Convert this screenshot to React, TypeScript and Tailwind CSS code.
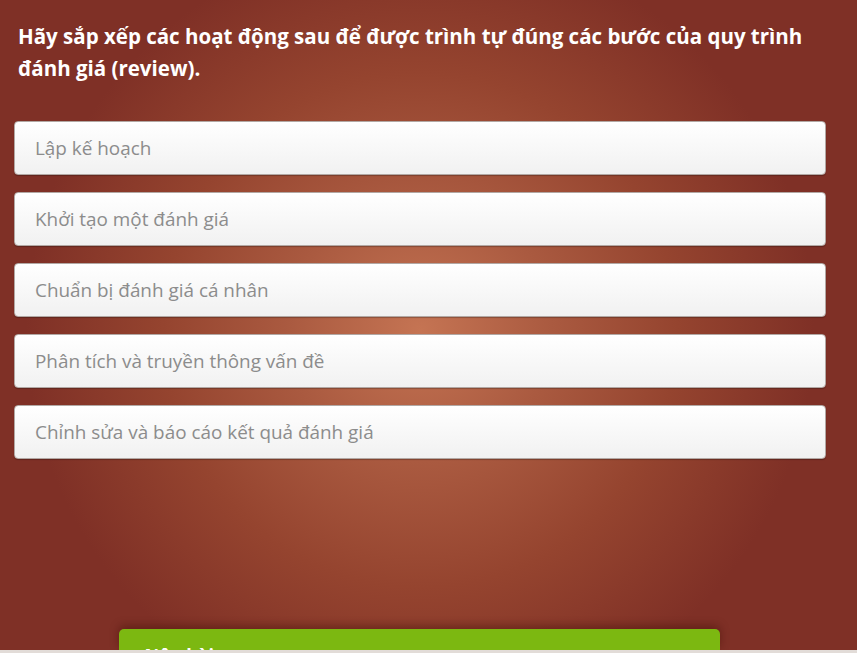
const steps = [
  'Lập kế hoạch',
  'Khởi tạo một đánh giá',
  'Chuẩn bị đánh giá cá nhân',
  'Phân tích và truyền thông vấn đề',
  'Chỉnh sửa và báo cáo kết quả đánh giá',
];

export default function App() {
  return (
    <div className="h-[653px] w-full overflow-hidden bg-[#e2dcd8] font-['Open_Sans','Noto_Sans',sans-serif]">
      <div className="flex h-[650px] flex-col overflow-hidden bg-[radial-gradient(circle_at_420px_330px,#c57453_0%,#aa5a40_24%,#95442f_47%,#7f3026_72%)]">
        {/* Question */}
        <h1 className="pt-[20px] pr-[30px] pl-[18px] text-[20.5px] leading-[32px] font-bold text-white">
          Hãy sắp xếp các hoạt động sau để được trình tự đúng các bước của quy trình đánh giá (review).
        </h1>

        {/* Answer items */}
        <div className="mt-[37px] flex flex-col gap-[17px] pl-[14px] pr-[31px]">
          {steps.map((s) => (
            <div
              key={s}
              className="flex h-[54px] items-center rounded-[4px] border border-[#b2a8a4] bg-gradient-to-b from-white to-[#f1f1f1] pl-[20px] text-[18.9px] text-[#8c8c8c] shadow-[0_1px_1px_rgba(0,0,0,0.25)]"
            >
              {s}
            </div>
          ))}
        </div>

        {/* Submit button (cut off) */}
        <div className="mt-auto flex justify-center pr-[19px]">
          <div className="h-[21px] w-[601px] rounded-t-[5px] bg-[#7cb811] px-[26px] pt-[16px] text-[18px] leading-[20px] font-bold text-white shadow-[0_-3px_10px_rgba(60,10,5,0.45)]">
            Nộp bài
          </div>
        </div>
      </div>
    </div>
  );
}
